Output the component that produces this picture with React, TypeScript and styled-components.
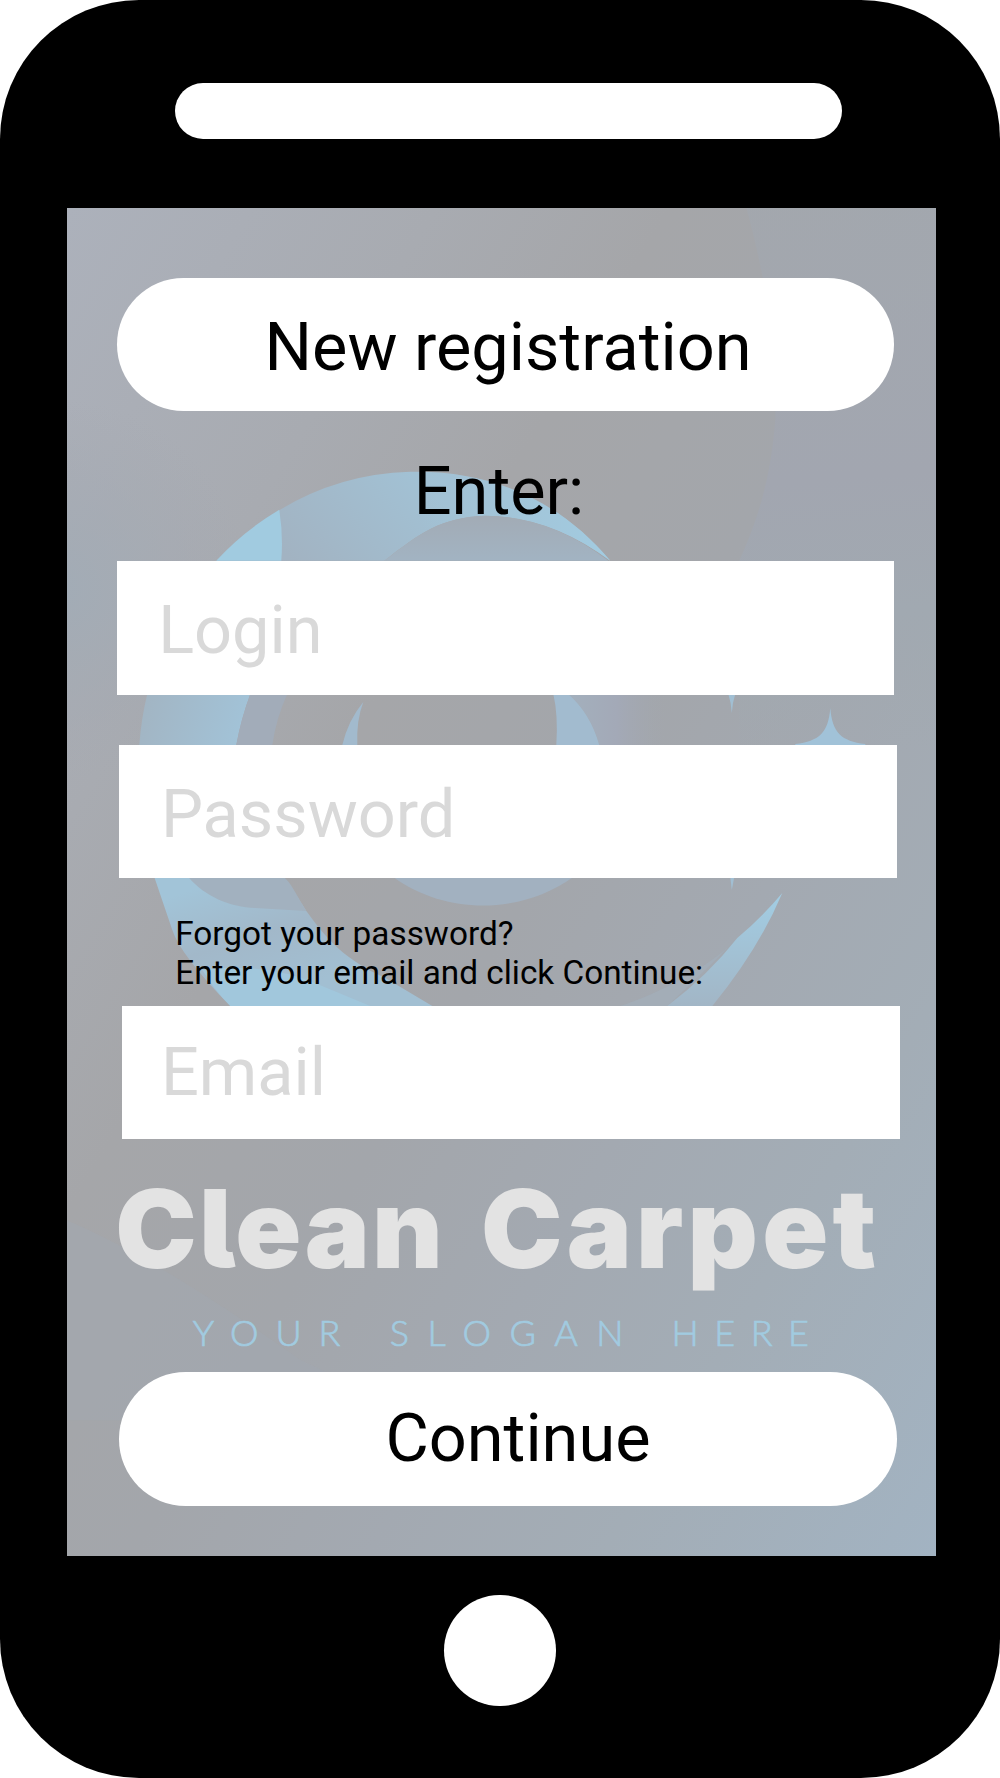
import React from "react";
import styled, { createGlobalStyle } from "styled-components";

const GlobalStyle = createGlobalStyle`
  html, body { margin: 0; padding: 0; background: #fff; }
  * { box-sizing: border-box; }
`;

const Phone = styled.main`
  width: 1000px;
  height: 1778px;
  background: #000;
  border-radius: 139px;
  display: flex;
  flex-direction: column;
  overflow: hidden;
  font-family: Roboto, "Liberation Sans", sans-serif;
  color: #000;
`;

const Speaker = styled.div`
  flex: none;
  width: 666.7px;
  height: 55.6px;
  margin: 83.3px 0 0 175px;
  border-radius: 28px;
  background: #fff;
`;

const Screen = styled.section`
  position: relative;
  flex: none;
  width: 869.4px;
  height: 1347.7px;
  margin: 69.4px 0 0 66.7px;
  padding-top: 69.5px;
  display: flex;
  flex-direction: column;
  align-items: flex-start;
  isolation: isolate;
`;

const Backdrop = styled.svg`
  position: absolute;
  inset: 0;
  width: 100%;
  height: 100%;
  z-index: -1;
`;

const HomeButton = styled.button`
  flex: none;
  align-self: center;
  width: 111.1px;
  height: 111.1px;
  margin: 38.6px 0 0;
  padding: 0;
  border: 0;
  border-radius: 50%;
  background: #fff;
`;

const Control = styled.div<{ $left: number; $top?: number; $padX: number; $padY: number }>`
  flex: none;
  display: flex;
  width: 777.8px;
  height: 133.3px;
  margin: ${(p) => p.$top ?? 0}px 0 0 ${(p) => p.$left}px;
  padding: ${(p) => p.$padY}px 0 0 ${(p) => p.$padX}px;
  background: #fff;
  font-size: 66.67px;
  line-height: 78px;
  white-space: nowrap;
`;

const Pill = styled(Control)`
  border-radius: 66.7px;
`;

const Field = styled(Control)`
  color: #d9d9d9;
`;

const Heading = styled.h1`
  flex: none;
  margin: 41.2px 0 31px 347px;
  font-size: 66.67px;
  font-weight: 400;
  line-height: 78px;
`;

const Hint = styled.p`
  flex: none;
  height: 78px;
  margin: 36.1px 0 13.8px 108.5px;
  font-size: 33.33px;
  line-height: 39px;
  white-space: nowrap;
`;

const Brand = styled.div`
  flex: none;
  height: 233.3px;
  padding-top: 24px;
`;

const BrandName = styled.div`
  display: flex;
  margin-left: 48.6px;
  height: 130px;
  font: 880 109px/130px Inter, "Liberation Sans", sans-serif;
  font-feature-settings: "cv05" 1;
  color: #e3e3e3;
`;

const Word = styled.span<{ $tracking: number; $after?: number }>`
  letter-spacing: ${(p) => p.$tracking}px;
  margin-right: ${(p) => p.$after ?? 0}px;
`;

const Slogan = styled.div`
  display: flex;
  margin: 17px 0 0 126px;
  font: 300 36px/44px Lato, "Open Sans", sans-serif;
  color: #a1cbe0;
  -webkit-text-stroke: 0.7px #a1cbe0;
  white-space: nowrap;
`;

function CarpetArt() {
  return (
    <Backdrop viewBox="66.7 208.3 869.4 1347.2" preserveAspectRatio="none" aria-hidden="true">
      <defs>
        <linearGradient id="base" gradientUnits="userSpaceOnUse" x1="66" y1="208" x2="1301" y2="949">
          <stop offset="0" stopColor="#acb1bb" />
          <stop offset="0.22" stopColor="#a8abb1" />
          <stop offset="0.36" stopColor="#a5a6a9" />
          <stop offset="0.52" stopColor="#a3a6ab" />
          <stop offset="0.66" stopColor="#a3a9b1" />
          <stop offset="0.8" stopColor="#a3adb6" />
          <stop offset="1" stopColor="#a2b3c2" />
        </linearGradient>
        <radialGradient id="leftTint" gradientUnits="userSpaceOnUse" cx="60" cy="590" r="190">
          <stop offset="0" stopColor="#a2acb6" />
          <stop offset="1" stopColor="#a4a8b0" stopOpacity="0" />
        </radialGradient>
        <linearGradient id="swoosh" gradientUnits="userSpaceOnUse" x1="750" y1="208" x2="800" y2="760">
          <stop offset="0" stopColor="#a2a8b0" stopOpacity="0.6" />
          <stop offset="0.5" stopColor="#a2a6b0" />
          <stop offset="0.75" stopColor="#a1a9b1" />
          <stop offset="1" stopColor="#a1a9b0" stopOpacity="0" />
        </linearGradient>
        <linearGradient id="topRing" gradientUnits="userSpaceOnUse" x1="300" y1="570" x2="410" y2="470">
          <stop offset="0" stopColor="#a2b3c2" />
          <stop offset="1" stopColor="#a2c1d4" />
        </linearGradient>
        <linearGradient id="crest" gradientUnits="userSpaceOnUse" x1="420" y1="0" x2="600" y2="0">
          <stop offset="0" stopColor="#a2c5d9" stopOpacity="0" />
          <stop offset="1" stopColor="#a2cbe0" />
        </linearGradient>
        <linearGradient id="domeFill" gradientUnits="userSpaceOnUse" x1="0" y1="515" x2="0" y2="570">
          <stop offset="0" stopColor="#a2abb5" />
          <stop offset="1" stopColor="#a2b5c5" />
        </linearGradient>
        <linearGradient id="leftRing" gradientUnits="userSpaceOnUse" x1="140" y1="690" x2="248" y2="720">
          <stop offset="0" stopColor="#a2b4c2" />
          <stop offset="1" stopColor="#a2c3d8" />
        </linearGradient>
        <linearGradient id="innerFade" gradientUnits="userSpaceOnUse" x1="568" y1="0" x2="665" y2="0">
          <stop offset="0" stopColor="#a3b0bd" />
          <stop offset="0.5" stopColor="#a3a9b7" />
          <stop offset="1" stopColor="#a2a8b0" stopOpacity="0" />
        </linearGradient>
        <linearGradient id="lowerRing" gradientUnits="userSpaceOnUse" x1="190" y1="890" x2="230" y2="1010">
          <stop offset="0" stopColor="#a2c4d8" />
          <stop offset="0.5" stopColor="#a2b8c9" />
          <stop offset="1" stopColor="#a2bfd2" />
        </linearGradient>
        <linearGradient id="tail" gradientUnits="userSpaceOnUse" x1="0" y1="900" x2="0" y2="1005">
          <stop offset="0" stopColor="#a2cce2" />
          <stop offset="1" stopColor="#a2b6c6" />
        </linearGradient>
      </defs>
      <rect x="66" y="208" width="871" height="1348" fill="url(#base)" />
      <rect x="66" y="400" width="200" height="380" fill="url(#leftTint)" />
      <path d="M746 208C767 285 776 350 775 420 770 485 755 525 739 561L739 760H937V208Z" fill="url(#swoosh)" />
      <path d="M66 1220Q160 1260 300 1360L430 1420H66Z" fill="#a2a8b1" opacity=".45" />

      <path d="M216 561Q300 475 410 472C490 470 560 501 610 561Q550 516 485 516C440 518 420 533 384 561Z" fill="url(#topRing)" />
      <path d="M410 472C490 470 560 501 610 561Q550 516 485 516Q450 516 420 533Z" fill="url(#crest)" />
      <path d="M216 561Q242 532 279 510Q283 535 281 561Z" fill="#a1cbe0" />
      <path d="M384 561C420 533 440 518 485 516Q550 516 608 561Z" fill="url(#domeFill)" />

      <path d="M147 694L250 694Q241 718 236 745H139Q141 718 147 694Z" fill="url(#leftRing)" />
      <path d="M250 694H287Q276 718 272 745H236Q241 718 250 694Z" fill="#a2acb9" />
      <path d="M363 702Q348 720 342 745H357Q356 720 363 702Z" fill="#a2bacd" />
      <path d="M568 694H665V745H599Q590 713 568 694Z" fill="url(#innerFade)" />
      <path d="M553 694H568Q590 713 599 745H556Q558 715 553 694Z" fill="#a2bbcf" />

      <path d="M728 694H735Q732 703 731.5 713Q731 703 728 694Z" fill="#a1bfd3" />
      <path d="M830 708C832 733 841 741 865 744V746H795V744C819 741 828 733 830 708Z" fill="#a1c2d8" />
      <path d="M730 877H734L731.5 890Z" fill="#a1bfd3" />

      <path d="M154 877H283C290 886 296 895 306 911C327 940 345 960 385 978L432 1006H230Q180 955 172 930Z" fill="url(#lowerRing)" />
      <path d="M188 877C205 897 230 907 255 908L306 911C296 895 290 881 283 877Z" fill="#a2b1bf" />
      <path d="M202 970Q265 962 317 984L370 1006H230Q214 990 202 970Z" fill="#a1c7dc" />
      <path d="M393 877C445 915 520 915 573 877Z" fill="#a2b1c0" />
      <path d="M737 938C710 967 660 993 620 1006H667L710 965Z" fill="#a2afbb" opacity=".7" />
      <path d="M782 893Q758 950 712 1006H667Q708 975 737 938Q761 918 782 893Z" fill="url(#tail)" />
    </Backdrop>
  );
}

export default function App() {
  return (
    <>
      <GlobalStyle />
      <Phone>
        <Speaker />
        <Screen>
          <CarpetArt />
          <Pill role="button" $left={50} $padX={147.8} $padY={30}>New registration</Pill>
          <Heading>Enter:</Heading>
          <Field $left={50} $padX={41.5} $padY={30}>Login</Field>
          <Field $left={52.7} $top={50} $padX={41.5} $padY={30}>Password</Field>
          <Hint>
            Forgot your password?
            <br />
            Enter your email and click Continue:
          </Hint>
          <Field $left={55.5} $padX={38.8} $padY={27}>Email</Field>
          <Brand>
            <BrandName>
              <Word $tracking={2.2} $after={36}>Clean</Word>
              <Word $tracking={4.3}>Carpet</Word>
            </BrandName>
            <Slogan>
              <Word $tracking={17} $after={32.4}>YOUR</Word>
              <Word $tracking={18.4} $after={29.8}>SLOGAN</Word>
              <Word $tracking={15.5}>HERE</Word>
            </Slogan>
          </Brand>
          <Pill role="button" $left={52.7} $padX={266} $padY={27}>Continue</Pill>
        </Screen>
        <HomeButton aria-label="Home" />
      </Phone>
    </>
  );
}
